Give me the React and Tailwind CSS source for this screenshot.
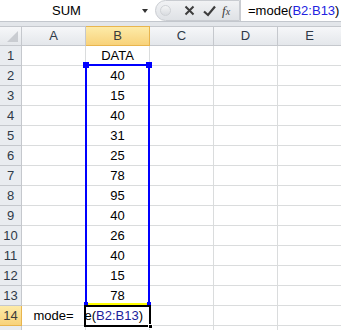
import React from "react";

const cols = ["A", "B", "C", "D", "E"];
const data = ["DATA", "40", "15", "40", "31", "25", "78", "95", "40", "26", "40", "15", "78"];

function Cell({ children, className = "" }) {
  return (
    <div
      className={`h-[20px] border-r border-b border-[#dadcdd] flex items-center justify-center text-[13px] text-black ${className}`}
    >
      {children}
    </div>
  );
}

export default function App() {
  const rows = Array.from({ length: 15 }, (_, i) => i + 1);

  return (
    <div
      className="relative w-[341px] h-[330px] overflow-hidden bg-white"
      style={{ fontFamily: '"Liberation Sans", Arial, sans-serif' }}
    >
      {/* formula bar */}
      <div className="flex h-[22px] border-b border-[#c3c7cd] bg-white">
        <div className="relative w-[155px] flex items-center justify-center text-[13px] text-black">
          <span className="pr-[22px]">SUM</span>
          <span className="absolute left-[142px] top-[9px] w-0 h-0 border-l-[3px] border-r-[3px] border-t-[4px] border-l-transparent border-r-transparent border-t-[#333]" />
        </div>
        <div className="w-[85px] flex items-center rounded-l-[11px] bg-gradient-to-b from-[#f1f2f4] to-[#dfe2e6] border border-[#c9ccd1]">
          <span className="ml-[4px] w-[11px] h-[11px] rounded-full bg-gradient-to-b from-[#f4f5f6] to-[#d9dce0] border border-[#cfd2d6]" />
          <svg className="ml-[13px]" width="11" height="11" viewBox="0 0 11 11">
            <path d="M1.5 1.5 L9.5 9.5 M9.5 1.5 L1.5 9.5" stroke="#3d3d3d" strokeWidth="2" />
          </svg>
          <svg className="ml-[8px]" width="13" height="12" viewBox="0 0 13 12">
            <path d="M1 6.5 L5 10 L12 1.5" stroke="#3d3d3d" strokeWidth="2.2" fill="none" />
          </svg>
          <span
            className="ml-[6px] text-[13px] italic text-[#3d3d3d] leading-none"
            style={{ fontFamily: '"Liberation Serif", serif' }}
          >
            f<span className="text-[10px]">x</span>
          </span>
        </div>
        <div className="flex-1 flex items-center pl-[7px] text-[13px] whitespace-nowrap overflow-hidden border-l border-[#c9ccd1] text-black">
          =mode(<span className="text-[#2323e0]">B2:B13</span>)
        </div>
      </div>
      <div className="h-[4px] bg-[#e3e6ea]" />

      {/* grid */}
      <div className="grid grid-cols-[22px_64px_64px_64px_64px_64px] w-[342px]">
        {/* header row */}
        <div className="relative h-[20px] border-r border-b border-t border-[#c5c8cd] bg-gradient-to-b from-[#f6f7f9] to-[#e4e7eb]">
          <span
            className="absolute right-[3px] bottom-[3px] w-0 h-0"
            style={{ borderBottom: "11px solid #c9ccd1", borderLeft: "11px solid transparent" }}
          />
        </div>
        {cols.map((c) => (
          <div
            key={c}
            className={`h-[20px] border-r border-b border-t flex items-center justify-center text-[13px] ${
              c === "B"
                ? "bg-gradient-to-b from-[#fdeba8] to-[#f8d27a] border-[#e8b54e] text-[#3b3b3b]"
                : "bg-gradient-to-b from-[#f6f7f9] to-[#e4e7eb] border-[#c5c8cd] text-[#2f3a48]"
            }`}
          >
            {c}
          </div>
        ))}

        {rows.map((r) => (
          <React.Fragment key={r}>
            <div
              className={`h-[20px] border-r border-b flex items-center justify-center text-[13px] ${
                r === 14
                  ? "bg-gradient-to-b from-[#fdeba8] to-[#f8d27a] border-[#e8b54e] text-[#3b3b3b]"
                  : "bg-[#e9ecf0] border-[#c5c8cd] text-[#2f3a48]"
              }`}
            >
              {r}
            </div>
            <Cell>{r === 14 ? "mode=" : ""}</Cell>
            <Cell className={r === 14 ? "justify-end overflow-hidden whitespace-nowrap" : ""}>
              {r === 14 ? (
                <span className="pr-[6px]">
                  e(<span className="text-[#1c1c9c]">B2:B13</span>)
                </span>
              ) : (
                data[r - 1] || ""
              )}
            </Cell>
            <Cell />
            <Cell />
            <Cell />
          </React.Fragment>
        ))}
      </div>

      {/* range being referenced */}
      <div className="absolute left-[85px] top-[64px] w-[65px] h-[241px] border-2 border-[#0000ff] pointer-events-none" />
      <span className="absolute left-[83px] top-[62px] w-[6px] h-[6px] bg-[#0000ff]" />
      <span className="absolute left-[146px] top-[62px] w-[6px] h-[6px] bg-[#0000ff]" />
      <div className="absolute left-[86px] top-[303px] w-[63px] h-[2px] bg-[#ffff00]" />
      <span className="absolute left-[84px] top-[302px] w-[4px] h-[3px] bg-[#0000ff]" />
      <span className="absolute left-[147px] top-[302px] w-[4px] h-[3px] bg-[#0000ff]" />

      {/* active cell */}
      <div className="absolute left-[84px] top-[305px] w-[67px] h-[22px] border-2 border-black pointer-events-none" />
      <span className="absolute left-[148px] top-[324px] w-[5px] h-[5px] bg-black border border-white" />
    </div>
  );
}
